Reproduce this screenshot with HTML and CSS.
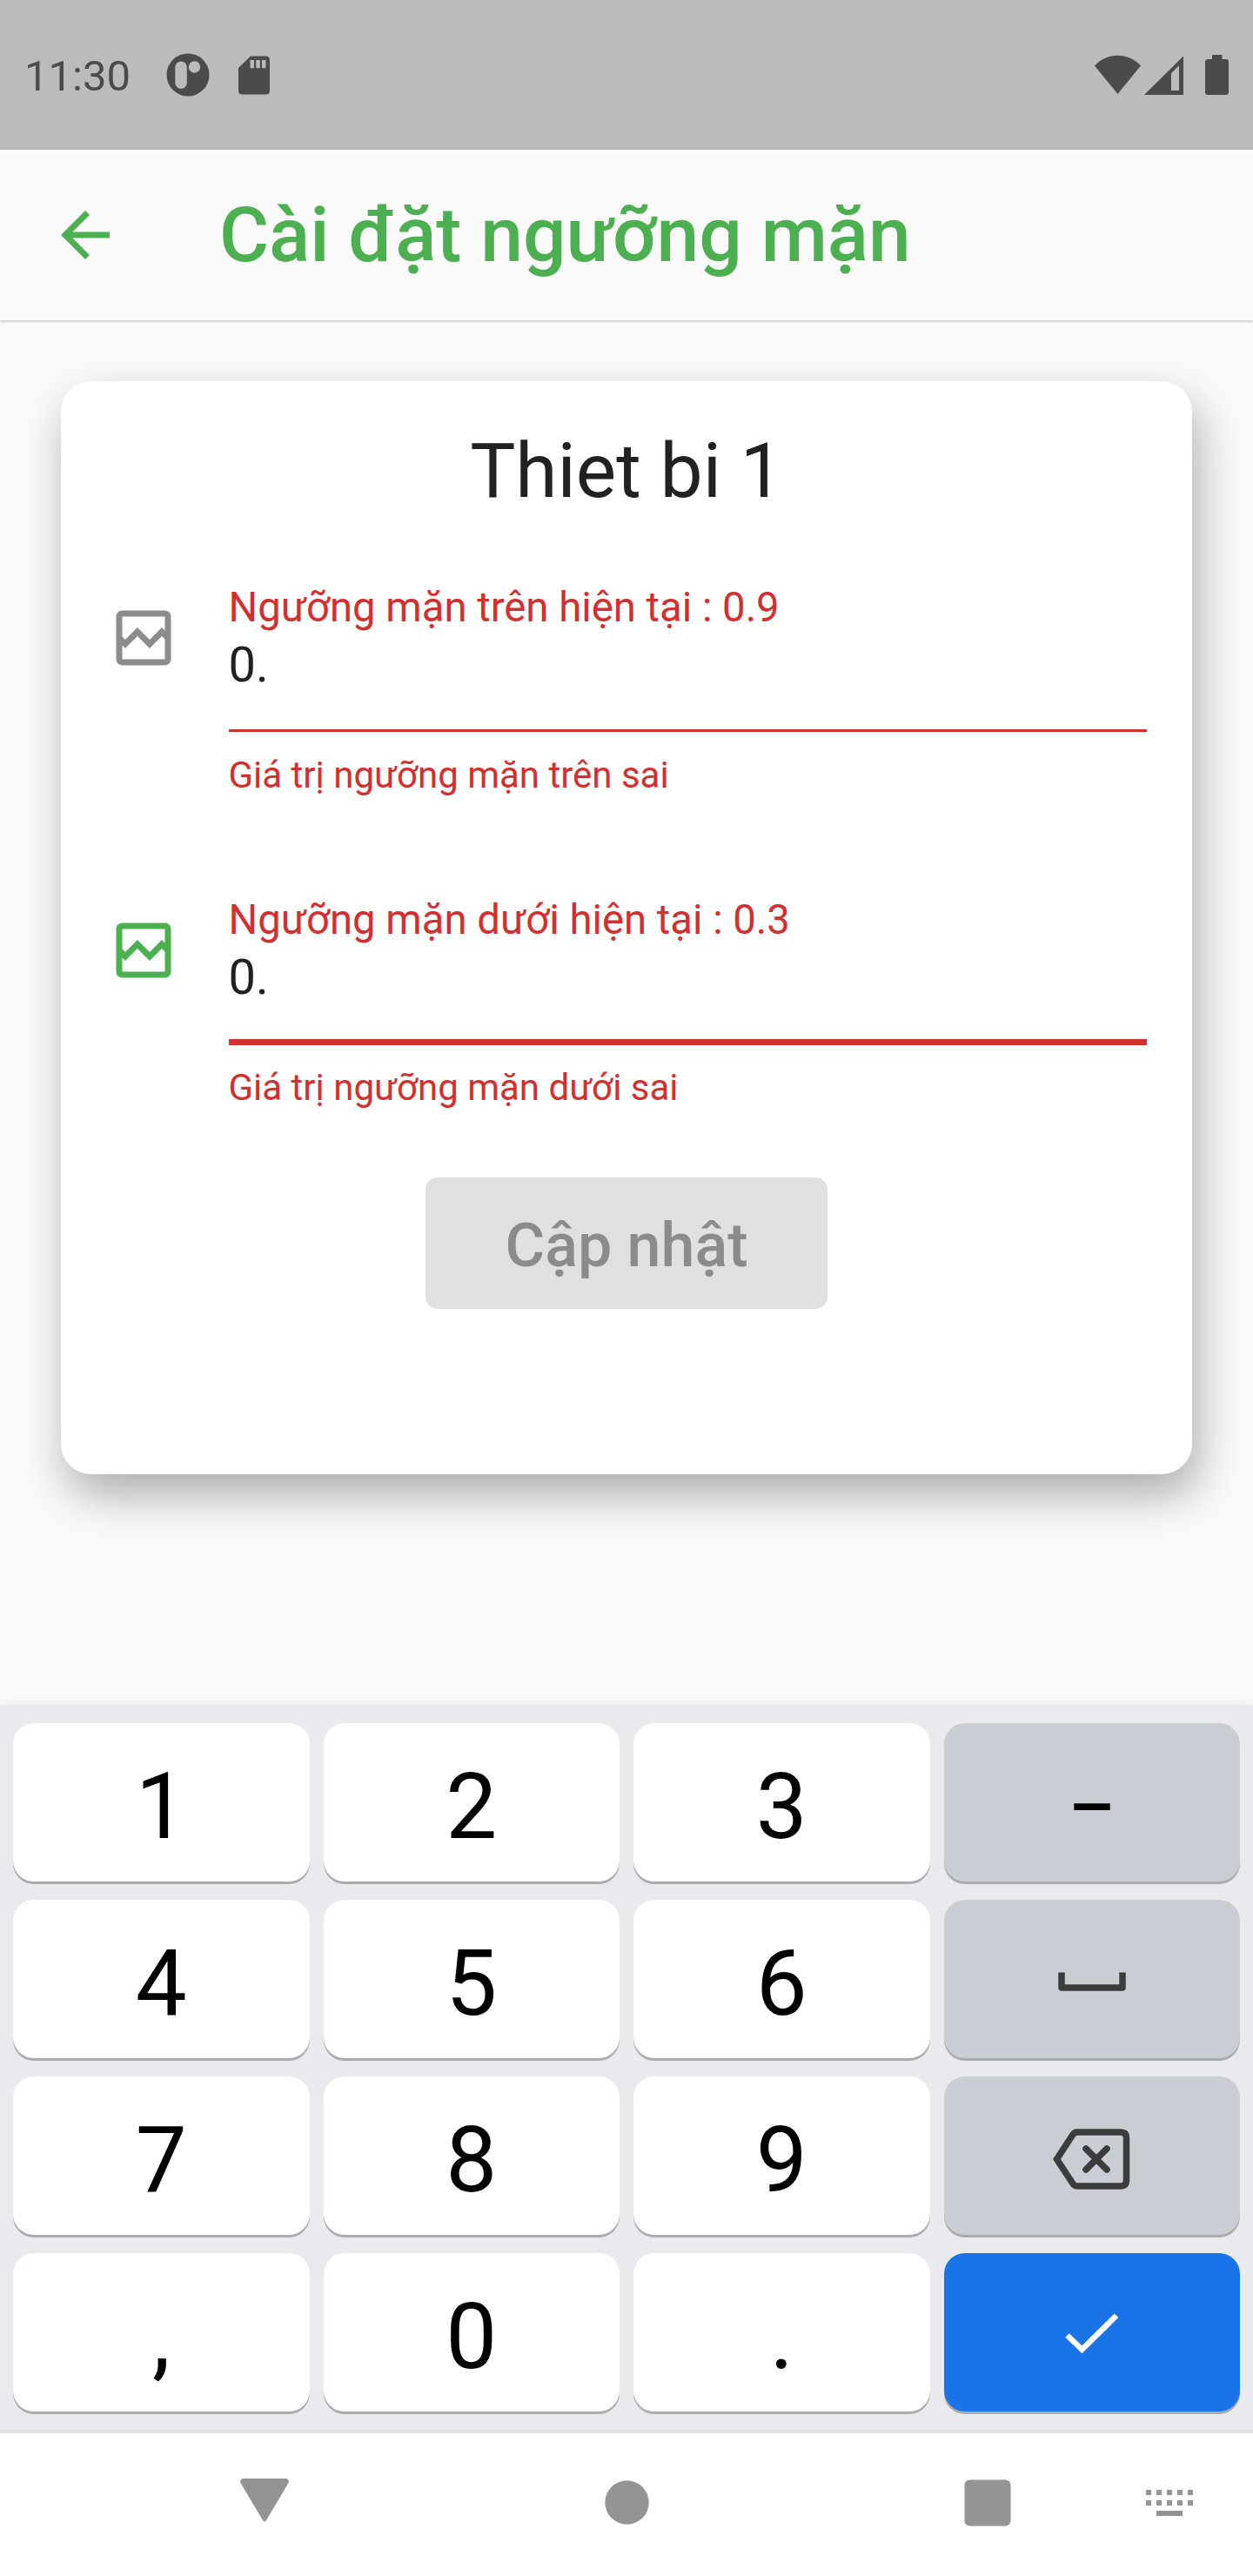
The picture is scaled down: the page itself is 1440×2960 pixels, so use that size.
FILE: index.html
```html
<!DOCTYPE html>
<html lang="vi">
<head>
<meta charset="utf-8">
<title>Cài đặt ngưỡng mặn</title>
<link rel="stylesheet" href="styles.css">
</head>
<body>
<div class="screen">
  <header class="status">
    <span class="clock">11:30</span>
    <svg class="status-app" width="50" height="50" viewBox="0 0 50 50"><circle cx="25" cy="25" r="24.5" fill="#4b4b4b"/><rect x="10.3" y="9.5" width="13.5" height="31.500" rx="6.750" fill="#bbb"/><circle cx="32.500" cy="16" r="6.700" fill="#bbb"/></svg>
    <svg class="status-sd" width="36" height="45" viewBox="0 0 36 45"><path fill="#4b4b4b" fill-rule="evenodd" d="M14 .5H31.500Q36 .5 36 5V40Q36 44.500 31.500 44.500H4.500Q0 44.500 0 40V14ZM13.500 5V14.300H18V5ZM20.300 5V14.300H24.800V5ZM27 5V14.300H31.500V5Z"/></svg>
    <span class="spacer"></span>
    <svg class="status-wifi" width="53" height="46" viewBox="0 0 53 46"><path fill="#4b4b4b" d="M26.500 45 0 12.500C14-3.300 39-3.300 53 12.500Z"/></svg>
    <svg class="status-cell" width="45" height="45" viewBox="0 0 45 45"><path fill="#4b4b4b" fill-rule="evenodd" d="M0 45 45 .5V45ZM31 20.300V40H40V11.300Z"/></svg>
    <svg class="status-battery" width="27" height="46" viewBox="0 0 27 46"><path fill="#4b4b4b" d="M8 0H19.500V5H24Q27 5 27 8V43Q27 46 24 46H3Q0 46 0 43V8Q0 5 3 5H8Z"/></svg>
  </header>

  <div class="appbar">
    <svg class="back" width="84" height="84" viewBox="0 0 24 24"><path fill="#4caf50" d="M20 11H7.830l5.590-5.590L12 4l-8 8 8 8 1.410-1.410L7.830 13H20v-2z"/></svg>
    <h1 class="title">Cài đặt ngưỡng mặn</h1>
  </div>

  <main class="content">
    <section class="card">
      <h2 class="device">Thiet bi 1</h2>
      <div class="row">
        <svg class="row-icon" width="84" height="84" viewBox="0 0 24 24"><path d="M19 3H5c-1.100 0-2 .9-2 2v14c0 1.100.9 2 2 2h14c1.100 0 2-.9 2-2V5c0-1.100-.9-2-2-2zm0 16H5v-4.580l.99 1 4-4 4 4 4-4 1.010 1.010V19zm0-9.410l-1.010-1.010-4 4-4-4-4 4-.99-1V5h14v4.590z"/></svg>
        <div class="field">
          <div class="label">Ngưỡng mặn trên hiện tại : 0.9</div>
          <div class="value">0.</div>
          <div class="error">Giá trị ngưỡng mặn trên sai</div>
        </div>
      </div>
      <div class="row row-focused">
        <svg class="row-icon" width="84" height="84" viewBox="0 0 24 24"><path d="M19 3H5c-1.100 0-2 .9-2 2v14c0 1.100.9 2 2 2h14c1.100 0 2-.9 2-2V5c0-1.100-.9-2-2-2zm0 16H5v-4.580l.99 1 4-4 4 4 4-4 1.010 1.010V19zm0-9.410l-1.010-1.010-4 4-4-4-4 4-.99-1V5h14v4.590z"/></svg>
        <div class="field">
          <div class="label">Ngưỡng mặn dưới hiện tại : 0.3</div>
          <div class="value">0.</div>
          <div class="error">Giá trị ngưỡng mặn dưới sai</div>
        </div>
      </div>
      <div class="submit">Cập nhật</div>
    </section>
  </main>

  <div class="keyboard">
    <div class="key">1</div><div class="key">2</div><div class="key">3</div><div class="key key-alt key-dash">–</div>
    <div class="key">4</div><div class="key">5</div><div class="key">6</div>
    <div class="key key-alt key-icon"><svg width="78" height="22" viewBox="0 0 78 22"><path fill="none" stroke="#3c3c3c" stroke-width="7.500" stroke-linejoin="round" d="M4 .5V18H74V.5"/></svg></div>
    <div class="key">7</div><div class="key">8</div><div class="key">9</div>
    <div class="key key-alt key-icon key-delete"><svg width="89" height="70" viewBox="0 0 89 70"><g fill="none" stroke="#3c3c3c" stroke-width="7.500"><path d="M4.500 35 22.500 7.500Q24.500 4 28 4H78Q84.500 4 84.500 10.500V59.500Q84.500 66 78 66H28Q24.500 66 22.500 62.500Z"/><path stroke-linecap="round" d="M38 23 62 47M62 23 38 47"/></g></svg></div>
    <div class="key">,</div><div class="key">0</div><div class="key">.</div>
    <div class="key key-enter key-icon"><svg width="62" height="47" viewBox="0 0 62 47"><path fill="none" stroke="#fff" stroke-width="6.500" d="M2.500 25.500 19.500 41.800 59 2.800"/></svg></div>
  </div>

  <nav class="navbar">
    <svg class="nav-back" width="56" height="50" viewBox="0 0 56 50"><path fill="#949494" d="M3 0H53Q57 1 55.500 5L30 48Q28 51 26 48L.5 5Q-1 1 3 0Z"/></svg>
    <svg class="nav-home" width="51" height="51" viewBox="0 0 51 51"><circle cx="25.500" cy="25.500" r="25.200" fill="#949494"/></svg>
    <svg class="nav-recent" width="54" height="54" viewBox="0 0 54 54"><rect x=".5" y=".5" width="53" height="53" rx="6" fill="#949494"/></svg>
    <svg class="nav-ime" width="54" height="30" viewBox="0 0 54 30"><path fill="#949494" d="M0 0h6v6H0zM12 0h6v6h-6zM24 0h6v6h-6zM36 0h6v6h-6zM48 0h6v6h-6zM0 12h6v6H0zM12 12h6v6h-6zM24 12h6v6h-6zM36 12h6v6h-6zM48 12h6v6h-6zM12 24h30v6H12z"/></svg>
  </nav>
</div>
</body>
</html>
```
FILE: styles.css
```css
* { box-sizing: border-box; }

body {
  margin: 0;
  font-family: Roboto, "Liberation Sans", sans-serif;
  background: #fafafa;
}

svg { display: block; flex: none; }

.screen {
  display: flex;
  flex-direction: column;
  width: 1440px;
  height: 2960px;
  overflow: hidden;
}

.status {
  flex: none;
  display: flex;
  align-items: center;
  height: 172px;
  padding: 0 28px;
  background: #bbb;
}
.clock {
  width: 163px;
  padding-top: 4px;
  font-size: 49px;
  line-height: 60px;
  color: #4b4b4b;
}
.status-sd { margin-left: 33px; }
.spacer { flex: 1; }
.status-wifi { margin-right: 4px; }
.status-cell { margin-right: 25px; }

.appbar {
  flex: none;
  display: flex;
  align-items: center;
  height: 196px;
  padding-left: 56px;
  background: #fafafa;
  box-shadow: 0 1px 3px rgba(0, 0, 0, .25);
}
.title {
  margin: 0 0 0 112px;
  font-size: 87.5px;
  line-height: 104px;
  font-weight: 500;
  color: #4caf50;
}

.content {
  flex: 1;
  padding: 70px 70px 0;
}
.card {
  height: 1256px;
  padding: 52px 52.5px 0;
  border-radius: 35px;
  background: #fff;
  box-shadow: 7px 24px 52px rgba(0, 0, 0, .31);
}
.device {
  margin: 0 0 77.6px;
  font-size: 87.5px;
  line-height: 102px;
  font-weight: 400;
  text-align: center;
  color: #212121;
}
.row {
  display: flex;
  gap: 56px;
  height: 359px;
}
.row-icon { margin-top: 21px; fill: #8c8c8c; }
.row-focused { height: 324.5px; }
.row-focused .row-icon { fill: #4caf50; }
.field { width: 1055px; color: #d32f2f; }
.label {
  font-size: 47.25px;
  line-height: 56px;
  white-space: nowrap;
}
.value {
  height: 115px;
  padding-top: 5px;
  border-bottom: 3.5px solid #d32f2f;
  font-size: 56px;
  line-height: 66px;
  color: #212121;
}
.row-focused .value { height: 116.5px; border-bottom-width: 7px; }
.error {
  padding-top: 25px;
  font-size: 42px;
  line-height: 50px;
}
.row-focused .error { padding-top: 23.5px; }
.submit {
  width: 462px;
  height: 151px;
  margin: 0 auto;
  border-radius: 14px;
  background: #e0e0e0;
  font-size: 70px;
  line-height: 156px;
  font-weight: 500;
  text-align: center;
  color: #8b8b8b;
}

.keyboard {
  flex: none;
  display: grid;
  grid-template-columns: repeat(4, 1fr);
  grid-auto-rows: 182px;
  gap: 21px 16px;
  height: 837px;
  padding: 21px 15px 0;
  background: #e8eaed;
  border-bottom: 4px solid #e0e0e0;
  box-shadow: 0 0 12px rgba(0, 0, 0, .09);
}
.key {
  border-radius: 24px;
  padding-top: 6px;
  background: #fff;
  box-shadow: 0 3px 0 #a9abae;
  font-size: 105px;
  line-height: 182px;
  text-align: center;
  color: #000;
}
.key-alt { background: #cbcdd5; }
.key-dash { font-size: 83px; font-weight: 500; }
.key-icon {
  display: flex;
  justify-content: center;
  padding-top: 83px;
}
.key-delete { padding-top: 60px; }
.key-enter { padding-top: 69px; background: #1b73e8; }

.navbar {
  flex: none;
  display: flex;
  align-items: flex-start;
  height: 164px;
  padding: 52px 0 0 276px;
  background: #fff;
}
.nav-home { margin: 2px 0 0 363px; }
.nav-recent { margin: 1px 0 0 362px; }
.nav-ime { margin: 13px 0 0 155px; }
```
